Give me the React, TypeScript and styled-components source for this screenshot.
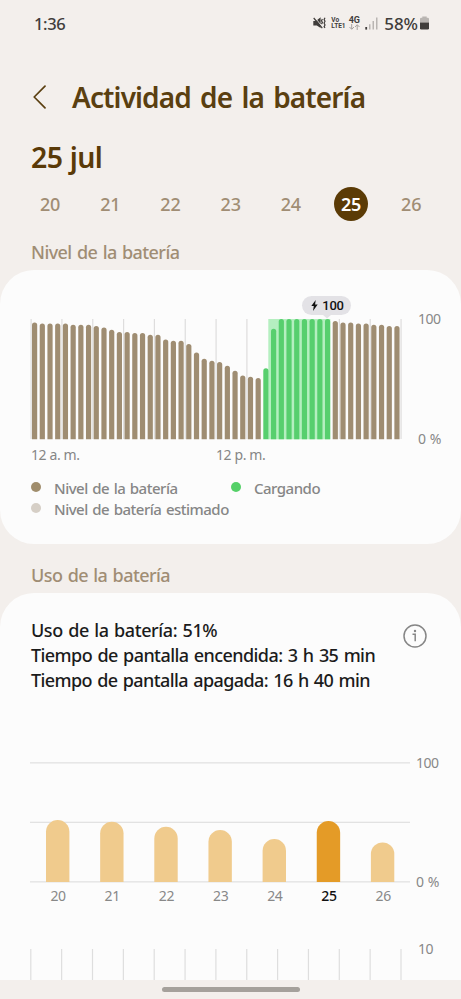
import React from 'react';
import styled, { createGlobalStyle } from 'styled-components';

const GlobalStyle = createGlobalStyle`
  * { box-sizing: border-box; }
  body {
    margin: 0;
    background: #f3efec;
    font-family: "Noto Sans", "Open Sans", sans-serif;
  }
`;

const Screen = styled.div`
  width: 461px;
  height: 999px;
  display: flex;
  flex-direction: column;
  overflow: hidden;
  background: #f3efec;
  white-space: nowrap;
`;

const StatusBar = styled.header`
  height: 46px;
  flex: none;
  display: flex;
  align-items: center;
  padding: 0 32px 0 34px;
  color: #403d3b;
  font-size: 16.5px;
  font-weight: 500;
`;

const Clock = styled.span`
  flex: 1;
  letter-spacing: -0.4px;
`;

const StatusIcons = styled.div`
  display: flex;
  align-items: center;
  svg { display: block; }
`;

const VolteMark = styled.span`
  display: flex;
  flex-direction: column;
  width: 14px;
  margin: 0 3px 0 5px;
  font: 700 6.5px/6.5px Roboto, sans-serif;
`;

const NetworkMark = styled.span`
  display: flex;
  flex-direction: column;
  align-items: center;
  width: 12px;
  margin-right: 5px;
  font: 700 9px/8px Roboto, sans-serif;
`;

const Percent = styled.span`
  margin: 0 2px 0 6px;
  font-size: 17px;
  letter-spacing: -0.1px;
`;

const TitleBar = styled.div`
  height: 102px;
  flex: none;
  display: flex;
  align-items: center;
  gap: 25px;
  padding: 0 0 1px 33px;
`;

const BackButton = styled.button`
  display: flex;
  padding: 0;
  border: 0;
  background: none;
`;

const Title = styled.h1`
  margin: 0;
  color: #5a3f10;
  font-size: 28px;
  line-height: 36px;
  font-weight: 600;
  letter-spacing: -0.88px;
  word-spacing: 2.8px;
`;

const DateHeading = styled.h2`
  margin: -9px 0 0 31px;
  flex: none;
  height: 37px;
  color: #5a3a08;
  font-size: 28.5px;
  line-height: 36px;
  font-weight: 600;
  letter-spacing: -0.6px;
  word-spacing: 0.5px;
`;

const DayRow = styled.nav`
  height: 34px;
  flex: none;
  margin-top: 11px;
  padding: 0 20px;
  display: grid;
  grid-template-columns: repeat(7, 60.2px);
  justify-items: center;
`;

const Day = styled.button<{ $active?: boolean }>`
  width: 34px;
  height: 34px;
  padding: 0;
  border: 0;
  border-radius: 50%;
  background: ${(p) => (p.$active ? '#5b3b06' : 'transparent')};
  color: ${(p) => (p.$active ? '#fff' : '#a08d74')};
  font: ${(p) => (p.$active ? 600 : 500)} 18px/34px "Noto Sans", sans-serif;
  letter-spacing: -0.2px;
`;

const SectionLabel = styled.h3`
  height: 49px;
  flex: none;
  margin: 0;
  padding: 19px 0 0 31px;
  color: #a08d74;
  font-size: 18px;
  line-height: 24px;
  font-weight: 500;
  letter-spacing: -0.57px;
  word-spacing: 1.2px;
`;

const LevelCard = styled.section`
  height: 274px;
  flex: none;
  padding: 25px 0 0 31px;
  border-radius: 34px;
  background: #fcfcfc;
`;

const UsageCard = styled.section`
  height: 387px;
  flex: none;
  padding: 26px 0 0 31px;
  border-radius: 34px 34px 0 0;
  background: #fcfcfc;
  overflow: hidden;
`;

const ChartRow = styled.div`
  display: flex;
  svg { display: block; flex: none; }
`;

const UsageRow = styled(ChartRow)`
  margin-left: -1px;
`;

const HourlyRow = styled(ChartRow)`
  margin: 43px 0 0 -1px;
`;

const LevelPlot = styled.div`
  position: relative;
  width: 370px;
`;

const Bubble = styled.div`
  position: absolute;
  left: 271px;
  top: 1px;
  width: 49px;
  height: 19px;
  border-radius: 10px;
  background: #e3e2e6;
  display: flex;
  align-items: center;
  justify-content: center;
  gap: 4px;
  padding-left: 2px;
  color: #111;
  font: 500 13px/19px Roboto, "Noto Sans", sans-serif;
  letter-spacing: -0.2px;
`;

const Scale = styled.div<{ $top: number; $left: number; $gap: number }>`
  display: flex;
  flex-direction: column;
  gap: ${(p) => p.$gap}px;
  margin: ${(p) => p.$top}px 0 0 ${(p) => p.$left}px;
  color: #888;
  font-size: 14px;
  line-height: 18px;
  letter-spacing: -0.45px;
  word-spacing: 1px;
`;

const HourLabels = styled.div`
  display: grid;
  grid-template-columns: 185px 185px;
  height: 20px;
  margin-top: -3px;
  color: #868686;
  font-size: 14px;
  line-height: 20px;
  letter-spacing: -0.4px;
`;

const Legend = styled.div`
  display: grid;
  grid-template-columns: 200px auto;
  margin-top: 13px;
`;

const LegendItem = styled.div<{ $color: string }>`
  width: 0;
  height: 21px;
  display: flex;
  align-items: center;
  gap: 13px;
  color: #868686;
  font-size: 15px;
  font-weight: 500;
  letter-spacing: -0.5px;
  word-spacing: 1.1px;
  &::before {
    content: '';
    flex: none;
    width: 10px;
    height: 10px;
    margin-top: -2px;
    border-radius: 50%;
    background: ${(p) => p.$color};
  }
`;

const Summary = styled.div`
  display: flex;
  justify-content: space-between;
  align-items: flex-start;
  padding-right: 34px;
  height: 136px;
  svg { display: block; margin-top: 5px; }
`;

const SummaryText = styled.div`
  margin-top: -1px;
  color: #1b1b1b;
  font-size: 18px;
  line-height: 24.8px;
  font-weight: 500;
  word-spacing: 1.2px;
`;

const SummaryLine = styled.p<{ $tracking: number }>`
  margin: 0;
  letter-spacing: ${(p) => p.$tracking}px;
`;

const UsageDays = styled.div`
  display: grid;
  grid-template-columns: repeat(7, 54.2px);
  justify-items: center;
  height: 20px;
  margin-top: -5px;
  color: #888;
  font-size: 14px;
  line-height: 20px;
  letter-spacing: -0.3px;
`;

const UsageDay = styled.span<{ $active?: boolean }>`
  color: ${(p) => (p.$active ? '#111' : 'inherit')};
  font-weight: ${(p) => (p.$active ? 500 : 400)};
`;

const NavBar = styled.footer`
  height: 19px;
  flex: none;
  display: flex;
  justify-content: center;
  padding-top: 7px;
  &::before {
    content: '';
    width: 138px;
    height: 5px;
    border-radius: 3px;
    background: #a5a19c;
  }
`;

const DAYS = [20, 21, 22, 23, 24, 25, 26];
const ACTIVE_DAY = 25;

// Y coordinate of each half-hour bar's top inside the level plot (0% sits at 144.3).
const LEVEL_TOPS = [
  27.7, 28.7, 28.7, 28.7, 28.7, 30, 30, 30, 31.3, 32.7, 35, 37.3, 37.3, 38.3, 38.3, 40, 40,
  44.7, 46, 46, 49.3, 57.7, 64, 66, 67.3, 71, 76, 80.7, 82, 83.3,
  73.3, 33.7, 24, 24, 24, 24, 24, 24, 24,
  26.3, 27.7, 27.7, 28.7, 28.7, 30, 30, 31.3, 31.3,
];
const CHARGE_FROM = 30;
const CHARGE_TO = 38;
const PLOT_BASE = 144.3;

const USAGE_TOPS = [820, 821.8, 826.7, 830, 839, 821, 842.4];

const roundedTop = (x: number, y: number, w: number, base: number) => {
  const r = w / 2;
  return `M${x} ${base}V${y + r}a${r} ${r} 0 0 1 ${w} 0V${base}z`;
};

function LevelChart() {
  return (
    <svg width="370" height="145" viewBox="0 0 370 145" overflow="visible">
      {Array.from({ length: 13 }, (_, i) => (
        <rect key={i} x={i * 30.83 - 0.5} y="24" width="1.2" height="120" fill="#dedddd" />
      ))}
      <rect x="237.3" y="24" width="62" height="120.3" fill="#b5efc0" />
      {LEVEL_TOPS.map((top, i) => (
        <path
          key={i}
          d={roundedTop(1 + i * 7.71, top - (i < CHARGE_FROM || i > CHARGE_TO ? 0.3 : 0), 5.2, PLOT_BASE)}
          fill={i >= CHARGE_FROM && i <= CHARGE_TO ? '#57cf6e' : '#9f8d72'}
        />
      ))}
      <path d="M291.5 19.5h9l-4.5 4z" fill="#e3e2e6" />
    </svg>
  );
}

function UsageChart() {
  return (
    <svg width="380" height="129" viewBox="30 755 380 129">
      {[762.8, 822.3, 881.8].map((y) => (
        <rect key={y} x="30" y={y - 0.6} width="380" height="1.3" fill="#e2e2e2" />
      ))}
      {USAGE_TOPS.map((top, i) => (
        <path
          key={i}
          d={roundedTop(46 + i * 54.15, top, 23.4, 882)}
          fill={DAYS[i] === ACTIVE_DAY ? '#e49b27' : '#f0cb8d'}
        />
      ))}
    </svg>
  );
}

function HourlyChart() {
  return (
    <svg width="380" height="40" viewBox="30 950 380 40">
      {Array.from({ length: 13 }, (_, i) => (
        <rect key={i} x={30.2 + i * 30.85} y="950" width="1.2" height="40" fill="#dedede" />
      ))}
    </svg>
  );
}

export default function App() {
  return (
    <Screen>
      <GlobalStyle />
      <StatusBar>
        <Clock>1:36</Clock>
        <StatusIcons>
          <svg width="13" height="14" viewBox="0 0 13 14">
            <path d="M0.3 5h2.6L7.6 1.2V12L3.8 9.5H0.3z" fill="#403d3b" />
            <path d="M1.6 1.4l8 9.6" stroke="#f3efec" strokeWidth="1" />
            <path d="M0.7 2l8.6 10.2" stroke="#403d3b" strokeWidth="1.2" />
            <path d="M9.4 3l-0.9 1.7 0.9 1.7-0.9 1.7M12 1.7l-0.9 1.8 0.9 1.8-0.9 1.8 0.9 1.8-0.9 1.8 0.9 1.2" fill="none" stroke="#403d3b" strokeWidth="1.2" />
          </svg>
          <VolteMark>
            <span>Vo</span>
            <span>LTE1</span>
          </VolteMark>
          <NetworkMark>
            <span>4G</span>
            <svg width="11" height="6" viewBox="0 0 11 6" fill="none" stroke="#a5a19f">
              <path d="M2.7 0v5M0.5 3l2.2 2.3L5 3M8.2 6V1M6 3l2.2-2.3L10.5 3" />
            </svg>
          </NetworkMark>
          <svg width="13" height="13" viewBox="0 0 13 13">
            <rect x="0.3" y="10" width="1.8" height="2.6" fill="#403d3b" />
            <path d="M4 7.2h1.5v5.4H4zM7.5 4h1.5v8.6H7.5zM11 0.6h1.5v12H11z" fill="#b9b5b2" />
          </svg>
          <Percent>58%</Percent>
          <svg width="9" height="14" viewBox="0 0 9 14">
            <path d="M0 6.5V3a1.3 1.3 0 0 1 1.3-1.3H2.3V.5h4.4v1.2h1A1.3 1.3 0 0 1 9 3v3.5z" fill="#b9b5b2" />
            <path d="M0 6.5h9v5.7a1.3 1.3 0 0 1-1.3 1.3H1.3A1.3 1.3 0 0 1 0 12.2z" fill="#403d3b" />
          </svg>
        </StatusIcons>
      </StatusBar>

      <TitleBar>
        <BackButton aria-label="Atrás">
          <svg width="14" height="24" viewBox="0 0 14 24" fill="none" stroke="#5a3f10" strokeWidth="1.7" strokeLinecap="round" strokeLinejoin="round">
            <path d="M12 1.2L1.2 12 12 22.8" />
          </svg>
        </BackButton>
        <Title>Actividad de la batería</Title>
      </TitleBar>

      <DateHeading>25 jul</DateHeading>
      <DayRow>
        {DAYS.map((d) => (
          <Day key={d} $active={d === ACTIVE_DAY}>{d}</Day>
        ))}
      </DayRow>

      <SectionLabel>Nivel de la batería</SectionLabel>
      <LevelCard>
        <ChartRow>
          <LevelPlot>
            <LevelChart />
            <Bubble>
              <svg width="7" height="11" viewBox="0 0 7 11">
                <path d="M4.7 0L0.3 6h2.5L2 11l4.7-6.4H4.1z" fill="#111" />
              </svg>
              100
            </Bubble>
          </LevelPlot>
          <Scale $top={14.5} $left={17} $gap={102}>
            <span>100</span>
            <span>0 %</span>
          </Scale>
        </ChartRow>
        <HourLabels>
          <span>12 a. m.</span>
          <span>12 p. m.</span>
        </HourLabels>
        <Legend>
          <LegendItem $color="#a08d6c">Nivel de la batería</LegendItem>
          <LegendItem $color="#55d068">Cargando</LegendItem>
          <LegendItem $color="#d6cfc6">Nivel de batería estimado</LegendItem>
        </Legend>
      </LevelCard>

      <SectionLabel>Uso de la batería</SectionLabel>
      <UsageCard>
        <Summary>
          <SummaryText>
            <SummaryLine $tracking={-0.42}>Uso de la batería: 51%</SummaryLine>
            <SummaryLine $tracking={-0.57}>Tiempo de pantalla encendida: 3 h 35 min</SummaryLine>
            <SummaryLine $tracking={-0.6}>Tiempo de pantalla apagada: 16 h 40 min</SummaryLine>
          </SummaryText>
          <svg width="24" height="24" viewBox="0 0 24 24" fill="none" stroke="#868686" strokeWidth="1.5">
            <circle cx="12" cy="12" r="11" />
            <path d="M9.5 10.3h2.7v7" />
            <circle cx="12" cy="7" r="1.2" fill="#868686" stroke="none" />
          </svg>
        </Summary>
        <UsageRow>
          <UsageChart />
          <Scale $top={-1} $left={6} $gap={101}>
            <span>100</span>
            <span>0 %</span>
          </Scale>
        </UsageRow>
        <UsageDays>
          {DAYS.map((d) => (
            <UsageDay key={d} $active={d === ACTIVE_DAY}>{d}</UsageDay>
          ))}
        </UsageDays>
        <HourlyRow>
          <HourlyChart />
          <Scale $top={-9} $left={8} $gap={0}>
            <span>10</span>
          </Scale>
        </HourlyRow>
      </UsageCard>
      <NavBar />
    </Screen>
  );
}
